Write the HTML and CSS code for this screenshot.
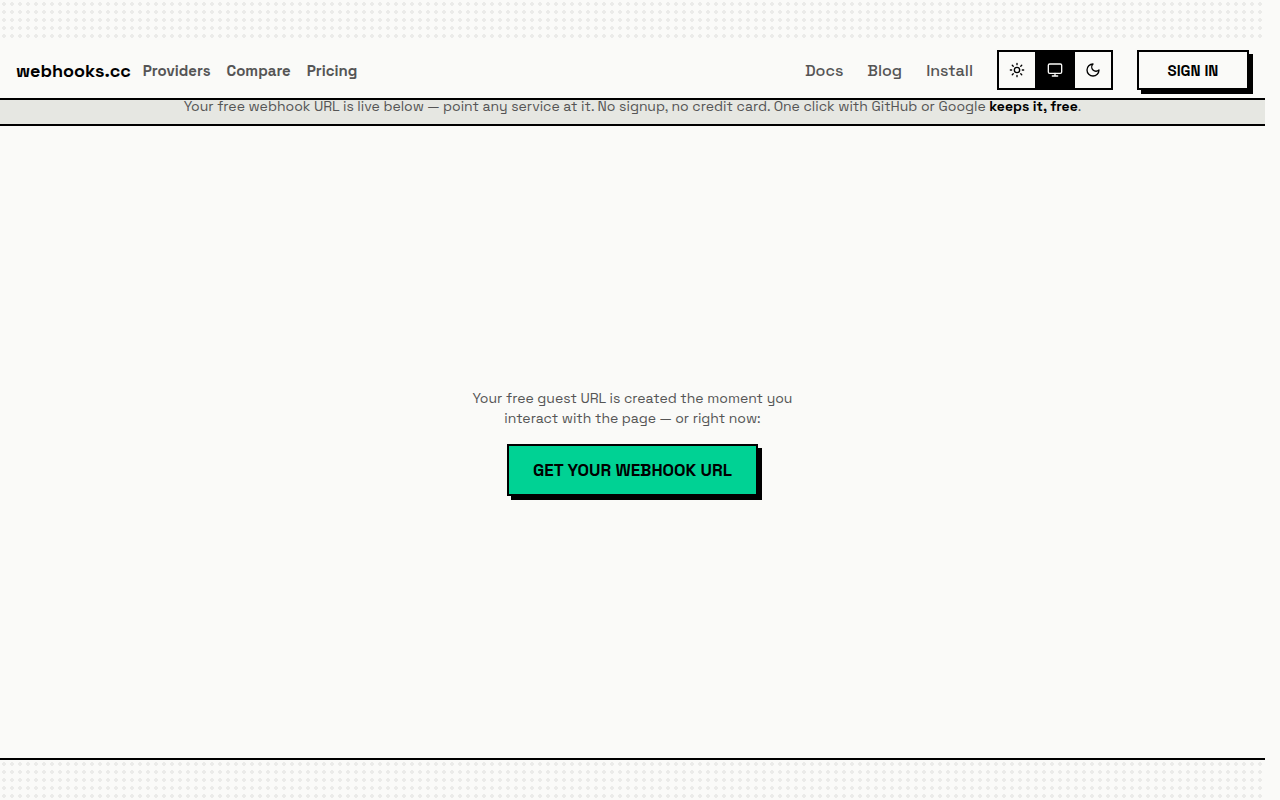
FILE: index.html
```html
<!DOCTYPE html>
<html lang="en">
  <head>
    <meta charset="utf-8" />
    <meta name="viewport" content="width=device-width, initial-scale=1" />
    <title>webhooks.cc</title>
    <link rel="stylesheet" href="styles.css">
  </head>

  <body>
    <div class="page">
      <header class="header">
        <a class="logo" href="#">webhooks.cc</a>
        <nav class="nav">
          <a href="#">Providers</a>
          <a href="#">Compare</a>
          <a href="#">Pricing</a>
        </nav>

        <div class="header-right">
          <nav class="links">
            <a href="#">Docs</a>
            <a href="#">Blog</a>
            <a href="#">Install</a>
          </nav>

          <!-- Theme switch -->
          <div class="theme">
            <button type="button" aria-label="Light theme">
              <svg viewBox="0 0 24 24">
                <circle cx="12" cy="12" r="4" />
                <path d="M12 2v2M12 20v2M4.93 4.93l1.41 1.41M17.66 17.66l1.41 1.41M2 12h2M20 12h2M6.34 17.66l-1.41 1.41M19.07 4.93l-1.41 1.41" />
              </svg>
            </button>
            <button type="button" class="active" aria-label="System theme">
              <svg viewBox="0 0 24 24">
                <rect x="2" y="3" width="20" height="14" rx="2" />
                <path d="M8 21h8M12 17v4" />
              </svg>
            </button>
            <button type="button" aria-label="Dark theme">
              <svg viewBox="0 0 24 24">
                <path d="M12 3a6 6 0 0 0 9 9 9 9 0 1 1-9-9Z" />
              </svg>
            </button>
          </div>

          <button type="button" class="btn sign-in">Sign in</button>
        </div>
      </header>

      <p class="banner">
        Your free webhook URL is live below — point any service at it. No
        signup, no credit card. One click with GitHub or Google
        <strong>keeps it, free</strong>.
      </p>

      <main class="hero">
        <p>
          Your free guest URL is created the moment you interact with the page —
          or right now:
        </p>
        <button type="button" class="btn get-url">Get your webhook URL</button>
      </main>
    </div>
  </body>
</html>
```

FILE: styles.css
```css
* {
  box-sizing: border-box;
}

body {
  margin: 0;
  padding-right: 15px;
  background: #fafaf8;
  color: #000;
  font-family: "Space Grotesk", Inter, "Liberation Sans", sans-serif;
}

a {
  color: inherit;
  text-decoration: none;
}

p {
  margin: 0;
}

/* dotted background shows above the header and below the hero */
.page {
  display: flex;
  flex-direction: column;
  min-height: 100vh;
  padding: 40px 0;
  background-image: radial-gradient(circle at 4px 4px, #ebebe9 2px, transparent 2px);
  background-size: 8px 8px;
}

.header {
  display: flex;
  align-items: center;
  gap: 12px;
  padding: 10px 16px 8px;
  background: #fafaf8;
  border-bottom: 2px solid #000;
}

.logo {
  font-size: 18px;
  font-weight: 700;
}

.nav,
.links,
.header-right {
  display: flex;
  align-items: center;
}

.nav {
  gap: 16px;
  color: #555;
  font-size: 15px;
  font-weight: 700;
}

.links {
  gap: 24px;
  color: #555;
  font-size: 16px;
  font-weight: 500;
}

.header-right {
  gap: 24px;
  margin-left: auto;
}

.theme {
  display: flex;
  height: 40px;
  border: 2px solid #000;
}

.theme button {
  display: flex;
  align-items: center;
  justify-content: center;
  width: 36px;
  padding: 0;
  border: none;
  background: #fafaf8;
  color: #000;
  cursor: pointer;
}

.theme .active {
  width: 40px;
  background: #000;
  color: #fafaf8;
}

.theme svg {
  width: 16px;
  height: 16px;
  fill: none;
  stroke: currentColor;
  stroke-width: 2;
  stroke-linecap: round;
  stroke-linejoin: round;
}

.btn {
  border: 2px solid #000;
  box-shadow: 4px 4px 0 #000;
  color: #000;
  font-family: inherit;
  font-weight: 700;
  text-transform: uppercase;
  cursor: pointer;
}

.sign-in {
  width: 112px;
  height: 40px;
  padding: 0;
  background: #fafaf8;
  font-size: 15px;
}

.banner {
  padding-bottom: 12px;
  background: #e6e7e2;
  border-bottom: 2px solid #000;
  color: #555;
  font-size: 14px;
  line-height: 12px;
  text-align: center;
}

.banner strong {
  color: #000;
}

.hero {
  flex: 1;
  display: flex;
  flex-direction: column;
  align-items: center;
  justify-content: center;
  gap: 16px;
  background: #fafaf8;
  border-bottom: 2px solid #000;
}

.hero p {
  max-width: 352px;
  color: #555;
  font-size: 14px;
  line-height: 20px;
  text-align: center;
}

.get-url {
  padding: 14px 24px;
  background: #00d294;
  font-size: 17px;
  line-height: 20px;
}
```
